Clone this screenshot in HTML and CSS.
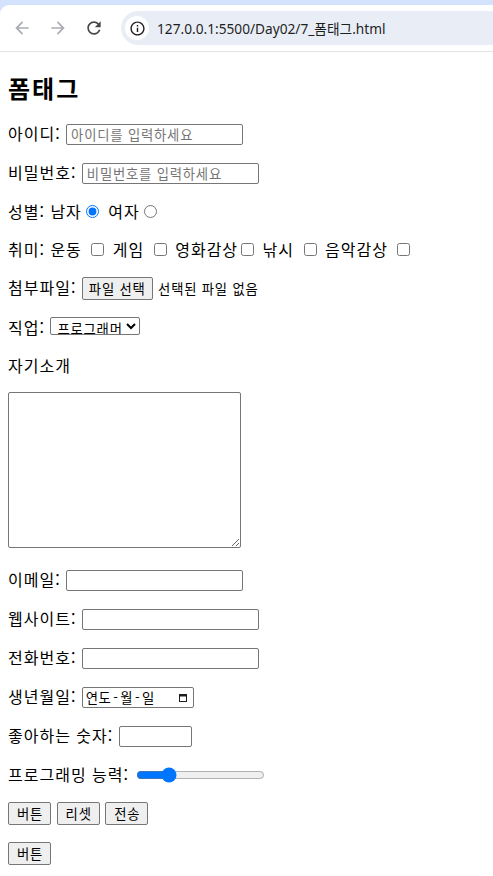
FILE: index.html
```html
<!DOCTYPE html>
<html lang="ko">
<head>
<meta charset="utf-8">
<title>폼태그</title>
<link rel="stylesheet" href="styles.css">
</head>
<body>
<header class="chrome">
  <div class="toolbar">
    <span class="nav-btn disabled" aria-label="뒤로">
      <svg viewBox="0 0 24 24" width="20" height="20"><path d="M20 11H7.83l5.59-5.59L12 4l-8 8 8 8 1.41-1.41L7.83 13H20v-2z"/></svg>
    </span>
    <span class="nav-btn disabled" aria-label="앞으로">
      <svg viewBox="0 0 24 24" width="20" height="20"><path d="M12 4l-1.41 1.41L16.17 11H4v2h12.17l-5.58 5.59L12 20l8-8z"/></svg>
    </span>
    <span class="nav-btn" aria-label="새로고침">
      <svg viewBox="0 0 24 24" width="20" height="20"><path d="M17.65 6.35C16.2 4.9 14.21 4 12 4c-4.42 0-7.99 3.58-7.99 8s3.57 8 7.99 8c3.73 0 6.84-2.55 7.73-6h-2.08c-.82 2.33-3.04 4-5.65 4-3.31 0-6-2.69-6-6s2.69-6 6-6c1.66 0 3.14.69 4.22 1.78L13 11h7V4l-2.35 2.35z"/></svg>
    </span>
    <div class="omnibox">
      <span class="site-info">
        <svg viewBox="0 0 24 24" width="17" height="17"><path d="M11 7h2v2h-2zm0 4h2v6h-2zm1-9C6.48 2 2 6.48 2 12s4.48 10 10 10 10-4.48 10-10S17.52 2 12 2zm0 18c-4.41 0-8-3.59-8-8s3.59-8 8-8 8 3.59 8 8-3.59 8-8 8z"/></svg>
      </span>
      <span class="url">127.0.0.1:5500/Day02/7_폼태그.html</span>
    </div>
  </div>
</header>

<main class="page">
  <section class="form-section">
    <h1 class="title">폼태그</h1>
    <form class="form">
      <p class="row">아이디: <input type="text" class="field" placeholder="아이디를 입력하세요"></p>
      <p class="row">비밀번호: <input type="password" class="field" placeholder="비밀번호를 입력하세요"></p>
      <p class="row">성별: 남자<input type="radio" name="gender" class="radio" checked> 여자<input type="radio" name="gender" class="radio"></p>
      <p class="row">취미: 운동 <input type="checkbox" class="check"> 게임 <input type="checkbox" class="check"> 영화감상<input type="checkbox" class="check tight"> 낚시 <input type="checkbox" class="check"> 음악감상 <input type="checkbox" class="check"></p>
      <p class="row">첨부파일: <button type="button" class="btn">파일 선택</button> <span class="small">선택된 파일 없음</span></p>
      <p class="row">직업: <select class="select"><option>프로그래머</option><option>디자이너</option></select></p>
      <p class="row">자기소개</p>
      <p class="row"><textarea class="memo"></textarea></p>
      <p class="row">이메일: <input type="email" class="field"></p>
      <p class="row">웹사이트: <input type="url" class="field"></p>
      <p class="row">전화번호: <input type="tel" class="field"></p>
      <p class="row">생년월일: <span class="date"><span class="date-text">연도<span class="dash">-</span>월<span class="dash">-</span>일</span><svg class="cal" viewBox="0 0 10 10" width="10" height="10"><path d="M1 1h8v8H1z M2 3.5h6v4.5H2z" fill-rule="evenodd"/></svg></span></p>
      <p class="row">좋아하는 숫자: <input type="number" class="num"></p>
      <p class="row">프로그래밍 능력: <input type="range" class="range" min="0" max="100" value="22"></p>
      <p class="row"><button type="button" class="btn action">버튼</button> <button type="reset" class="btn action">리셋</button> <button type="submit" class="btn action">전송</button></p>
      <p class="row"><button type="button" class="btn action">버튼</button></p>
    </form>
  </section>
</main>
</body>
</html>
```

FILE: styles.css
```css
html, body {
  margin: 0;
  padding: 0;
  background: #ffffff;
}

body {
  font-family: "Noto Sans CJK KR", "Noto Sans", sans-serif;
  font-size: 16px;
  color: #000000;
}

/* ---------- browser chrome ---------- */
.chrome {
  background: #d3e3fd;
  padding-top: 5px;
}

.toolbar {
  background: #ffffff;
  border-top-left-radius: 9px;
  height: 46px;
  border-bottom: 1px solid #e3e3e3;
  display: flex;
  align-items: center;
  padding-left: 4px;
}

.nav-btn {
  width: 36px;
  height: 36px;
  display: flex;
  align-items: center;
  justify-content: center;
  fill: #474747;
}

.nav-btn.disabled {
  fill: #a9acb0;
}

.omnibox {
  margin-left: 9px;
  flex: 1;
  height: 34px;
  background: #e9eef6;
  border-radius: 17px 0 0 17px;
  display: flex;
  align-items: center;
  padding-left: 4px;
}

.site-info {
  width: 24px;
  height: 24px;
  border-radius: 50%;
  background: #ffffff;
  display: flex;
  align-items: center;
  justify-content: center;
  fill: #1f1f1f;
}

.url {
  margin-left: 8px;
  font-family: "Noto Sans", "Noto Sans CJK KR", sans-serif;
  font-size: 13.7px;
  color: #1f1f1f;
  white-space: nowrap;
}

/* ---------- page ---------- */
.page {
  margin: 8px;
}

.title {
  font-size: 24px;
  font-weight: bold;
  margin: 20px 0 18px;
  line-height: 32px;
  letter-spacing: 2px;
}

.row {
  margin: 16px 0;
  line-height: 22px;
  letter-spacing: 1px;
}

.field,
.num,
.select,
.btn,
.memo,
.date,
.small {
  font-family: "Noto Sans CJK KR", "Noto Sans", sans-serif;
  font-size: 13.33px;
  letter-spacing: 0.8px;
}

.field {
  box-sizing: border-box;
  width: 177px;
  height: 21px;
  border: 1px solid #767676;
  border-radius: 2px;
  padding: 1px 4px;
  margin: 0;
}

.field::placeholder {
  color: #757575;
}

.radio {
  margin: 3px 4px 0 4px;
}

.check {
  margin: 3px 3px 3px 4px;
}

.check.tight {
  margin-left: 3px;
}

.num {
  box-sizing: border-box;
  width: 73px;
  height: 21px;
  border: 1px solid #767676;
  border-radius: 2px;
  padding: 1px 2px;
  margin: 0;
}

.btn {
  box-sizing: border-box;
  height: 23px;
  padding: 0 6px;
  line-height: 19px;
  background: #efefef;
  border: 1px solid #767676;
  border-radius: 2px;
  color: #000000;
  margin: 0;
}

.btn.action {
  padding: 0 7px 0 8px;
}

.select {
  box-sizing: border-box;
  width: 90px;
  height: 18px;
  border: 1px solid #767676;
  border-radius: 2px;
  padding: 0 0 0 2px;
  margin: 0;
  background: #ffffff;
  color: #000000;
  line-height: 16px;
}

.memo {
  box-sizing: border-box;
  width: 233px;
  height: 156px;
  border: 1px solid #767676;
  border-radius: 2px;
  margin: 0;
  padding: 2px;
}

.date {
  box-sizing: border-box;
  display: inline-flex;
  align-items: center;
  justify-content: space-between;
  width: 112px;
  height: 21px;
  border: 1px solid #767676;
  border-radius: 2px;
  padding: 0 5px 0 3px;
  line-height: 19px;
  letter-spacing: 0.4px;
}

.dash {
  padding: 0 2px;
}

.cal {
  fill: #1f1f1f;
}

.range {
  width: 129px;
  margin: 2px;
  vertical-align: -2px;
}
```
